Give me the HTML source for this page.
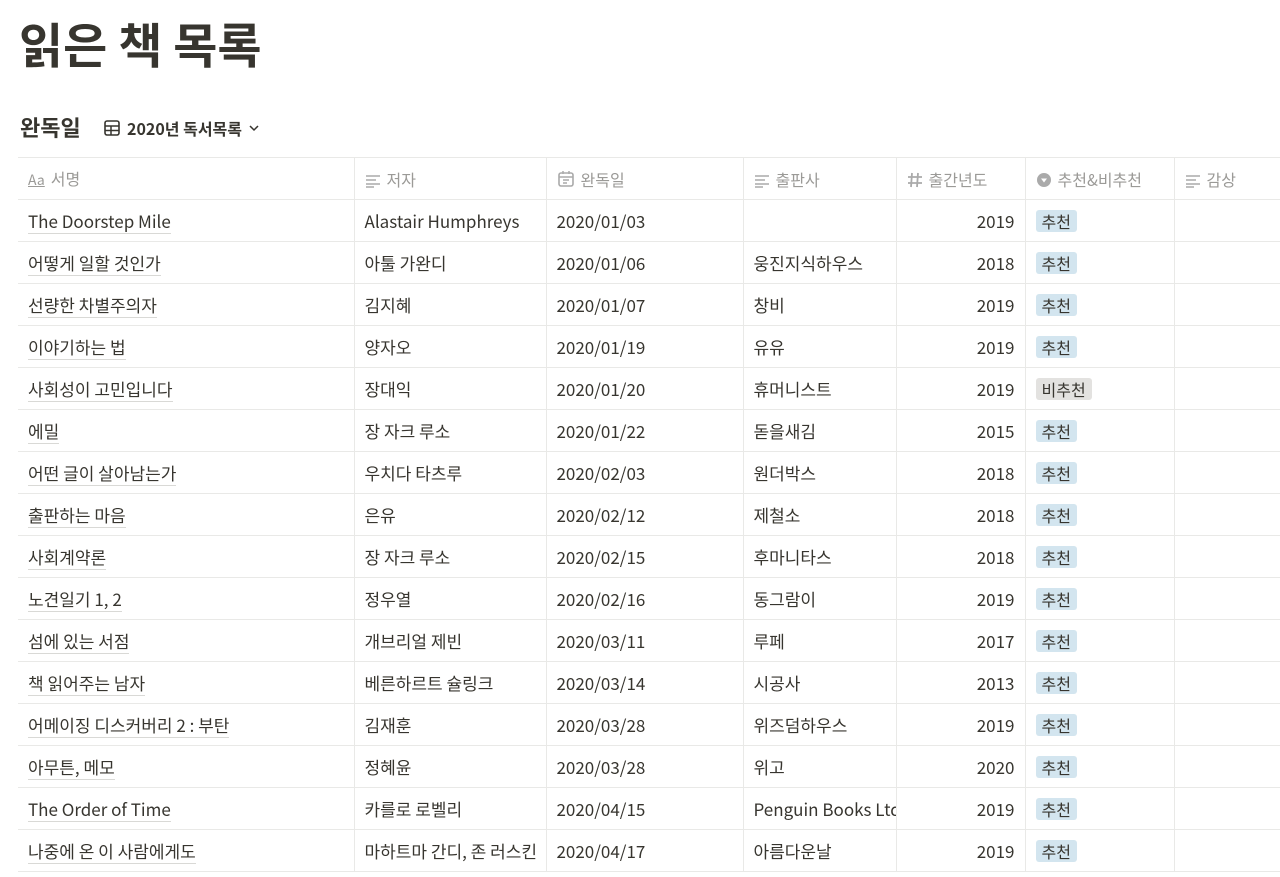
<!DOCTYPE html>
<html><head><meta charset="utf-8"><style>
body{margin:0;background:#fff;font-family:"Noto Sans CJK KR",sans-serif;color:#37352f;width:1280px;height:877px;overflow:hidden;position:relative}
h1{position:absolute;left:19px;top:10px;margin:0;font-size:48px;font-weight:700;line-height:64px}
.vt{position:absolute;left:20px;top:112px;font-size:22px;font-weight:700;line-height:30px}
.vn{position:absolute;left:103px;top:116px;font-size:16px;font-weight:700;line-height:24px;display:flex;align-items:center;gap:6px}
table{position:absolute;left:18px;top:157px;border-collapse:collapse;table-layout:fixed;width:1290px}
td,th{height:41px;border:1px solid #e9e9e7;padding:0 10px;font-size:17px;line-height:24px;white-space:nowrap;overflow:hidden;text-align:left;vertical-align:middle}
tr td:first-child,tr th:first-child{border-left:none}
th{font-weight:400;color:#9b9a97;font-size:16px}
th svg{vertical-align:-2px;margin-right:6px}
.t{border-bottom:1px solid #d9d9d6}
.r{text-align:right}
.g{display:inline-block;background:#d3e5ef;border-radius:3px;padding:0 6px;line-height:22px;font-size:16px}
.g.n{background:#e3e2e0}
</style></head><body>
<h1>읽은 책 목록</h1>
<div class="vt">완독일</div>
<div class="vn"><svg width="18" height="18" viewBox="0 0 18 18"><rect x="2" y="2" width="14" height="14" rx="2" fill="none" stroke="#37352f" stroke-width="1.6"/><path d="M2 7h14M2 11.5h14M8 7v9" stroke="#37352f" stroke-width="1.5"/></svg>2020년 독서목록 <svg width="12" height="12" viewBox="0 0 12 12"><path d="M2 4l4 4 4-4" fill="none" stroke="#37352f" stroke-width="1.5"/></svg></div>
<table>
<colgroup><col style="width:336px"><col style="width:192px"><col style="width:197px"><col style="width:153px"><col style="width:129px"><col style="width:149px"><col style="width:134px"></colgroup>
<tr><th><span style="text-decoration:underline;font-size:14px;margin-right:6px">Aa</span>서명</th>
<th><svg width="16" height="14"><path d="M1 2h14M1 6h10M1 10h14M1 13h8" stroke="#aaa" stroke-width="1.6"/></svg>저자</th>
<th><svg width="18" height="18" viewBox="0 0 18 18"><rect x="2" y="3" width="14" height="13" rx="2" fill="none" stroke="#aaa" stroke-width="1.6"/><path d="M2 7h14M6 10h6M6 13h4M6 1v3M12 1v3" stroke="#aaa" stroke-width="1.5"/></svg>완독일</th>
<th><svg width="16" height="14"><path d="M1 2h14M1 6h10M1 10h14M1 13h8" stroke="#aaa" stroke-width="1.6"/></svg>출판사</th>
<th><svg width="16" height="16"><path d="M5 1L4 15M11 1L10 15M1 5h14M1 11h14" stroke="#aaa" stroke-width="1.8"/></svg>출간년도</th>
<th><svg width="16" height="16"><circle cx="8" cy="8" r="7" fill="#aaa"/><path d="M5 6.5h6L8 10.5z" fill="#fff"/></svg>추천&amp;비추천</th>
<th><svg width="16" height="14"><path d="M1 2h14M1 6h10M1 10h14M1 13h8" stroke="#aaa" stroke-width="1.6"/></svg>감상</th></tr>
<tr><td><span class="t">The Doorstep Mile</span></td><td>Alastair Humphreys</td><td>2020/01/03</td><td></td><td class="r">2019</td><td><span class="g">추천</span></td><td></td></tr>
<tr><td><span class="t">어떻게 일할 것인가</span></td><td>아툴 가완디</td><td>2020/01/06</td><td>웅진지식하우스</td><td class="r">2018</td><td><span class="g">추천</span></td><td></td></tr>
<tr><td><span class="t">선량한 차별주의자</span></td><td>김지혜</td><td>2020/01/07</td><td>창비</td><td class="r">2019</td><td><span class="g">추천</span></td><td></td></tr>
<tr><td><span class="t">이야기하는 법</span></td><td>양자오</td><td>2020/01/19</td><td>유유</td><td class="r">2019</td><td><span class="g">추천</span></td><td></td></tr>
<tr><td><span class="t">사회성이 고민입니다</span></td><td>장대익</td><td>2020/01/20</td><td>휴머니스트</td><td class="r">2019</td><td><span class="g n">비추천</span></td><td></td></tr>
<tr><td><span class="t">에밀</span></td><td>장 자크 루소</td><td>2020/01/22</td><td>돋을새김</td><td class="r">2015</td><td><span class="g">추천</span></td><td></td></tr>
<tr><td><span class="t">어떤 글이 살아남는가</span></td><td>우치다 타츠루</td><td>2020/02/03</td><td>원더박스</td><td class="r">2018</td><td><span class="g">추천</span></td><td></td></tr>
<tr><td><span class="t">출판하는 마음</span></td><td>은유</td><td>2020/02/12</td><td>제철소</td><td class="r">2018</td><td><span class="g">추천</span></td><td></td></tr>
<tr><td><span class="t">사회계약론</span></td><td>장 자크 루소</td><td>2020/02/15</td><td>후마니타스</td><td class="r">2018</td><td><span class="g">추천</span></td><td></td></tr>
<tr><td><span class="t">노견일기 1, 2</span></td><td>정우열</td><td>2020/02/16</td><td>동그람이</td><td class="r">2019</td><td><span class="g">추천</span></td><td></td></tr>
<tr><td><span class="t">섬에 있는 서점</span></td><td>개브리얼 제빈</td><td>2020/03/11</td><td>루페</td><td class="r">2017</td><td><span class="g">추천</span></td><td></td></tr>
<tr><td><span class="t">책 읽어주는 남자</span></td><td>베른하르트 슐링크</td><td>2020/03/14</td><td>시공사</td><td class="r">2013</td><td><span class="g">추천</span></td><td></td></tr>
<tr><td><span class="t">어메이징 디스커버리 2 : 부탄</span></td><td>김재훈</td><td>2020/03/28</td><td>위즈덤하우스</td><td class="r">2019</td><td><span class="g">추천</span></td><td></td></tr>
<tr><td><span class="t">아무튼, 메모</span></td><td>정혜윤</td><td>2020/03/28</td><td>위고</td><td class="r">2020</td><td><span class="g">추천</span></td><td></td></tr>
<tr><td><span class="t">The Order of Time</span></td><td>카를로 로벨리</td><td>2020/04/15</td><td>Penguin Books Ltd</td><td class="r">2019</td><td><span class="g">추천</span></td><td></td></tr>
<tr><td><span class="t">나중에 온 이 사람에게도</span></td><td>마하트마 간디, 존 러스킨</td><td>2020/04/17</td><td>아름다운날</td><td class="r">2019</td><td><span class="g">추천</span></td><td></td></tr>
</table>
</body></html>
